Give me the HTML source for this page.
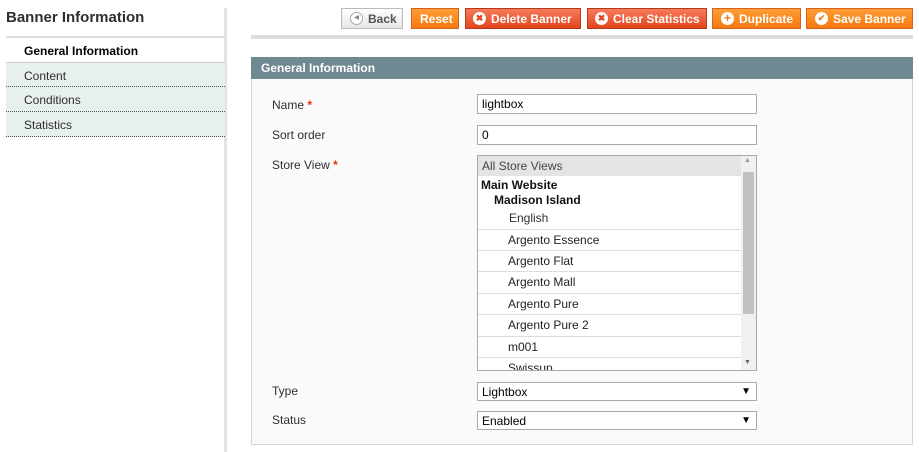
<!DOCTYPE html><html><head><style>
*{margin:0;padding:0;box-sizing:border-box}
body{width:919px;height:452px;background:#fff;font-family:"Liberation Sans",sans-serif;font-size:12px;color:#2f2f2f;position:relative;overflow:hidden}
.a{position:absolute}
.tab{position:absolute;left:6px;width:219px;height:25px;background:#e7efef;border-bottom:1px dotted #555;padding:6px 0 0 18px;font-size:12px;color:#2f2f2f}
.btn{position:absolute;top:8px;height:21px;border:1px solid #d76120;background:linear-gradient(#ff9d35,#f47a10);color:#fff;font-weight:bold;font-size:12px;padding-left:8px;white-space:nowrap;display:flex;align-items:center}
.red{background:linear-gradient(#f77a5a,#e2451c);border-color:#b33a1a}
.ic{display:inline-block;width:13px;height:13px;border-radius:50%;background:#fff;margin-right:5px;position:relative;color:#e2451c;font-size:9px;line-height:13px;text-align:center;flex:none}
.lbl{position:absolute;left:272px;font-size:12px}
.req{color:#eb340a;font-weight:bold}
.in{position:absolute;left:477px;width:280px;height:20px;border:1px solid #aaa;background:#fff;padding:2px 4px;font-size:12px;color:#000}
.opt{position:absolute;left:478px;width:263px;border-top:1px solid #ddd;color:#222}
</style></head><body>
<div class="a" style="left:224px;top:8px;width:3px;height:444px;background:#e2e2e2"></div>
<div class="a" style="left:6px;top:9px;font-size:15px;font-weight:bold;color:#2f2f2f">Banner Information</div>
<div class="a" style="left:6px;top:36px;width:219px;height:2px;background:#ddd"></div>
<div class="a" style="left:24px;top:44px;font-weight:bold;color:#000">General Information</div>
<div class="tab" style="top:62px;border-top:1px solid #ccc">Content</div>
<div class="tab" style="top:87px">Conditions</div>
<div class="tab" style="top:112px">Statistics</div>

<div class="btn" style="left:341px;width:62px;background:linear-gradient(#fff,#e6e6e6);border-color:#bbb;color:#555"><span class="ic" style="border:1px solid #aaa;color:#888;font-size:6px;line-height:11px">◀</span>Back</div>
<div class="btn" style="left:411px;width:48px">Reset</div>
<div class="btn red" style="left:465px;width:116px;padding-left:7px"><span class="ic">✖</span>Delete Banner</div>
<div class="btn red" style="left:587px;width:120px;padding-left:7px"><span class="ic">✖</span>Clear Statistics</div>
<div class="btn" style="left:712px;width:89px"><span class="ic" style="color:#f47a10;font-weight:bold;font-size:12px">+</span>Duplicate</div>
<div class="btn" style="left:806px;width:107px"><span class="ic" style="color:#f47a10;font-size:9px">✔</span>Save Banner</div>
<div class="a" style="left:251px;top:35px;width:662px;height:4px;background:#ddd"></div>

<div class="a" style="left:251px;top:57px;width:662px;height:22px;background:#6f8992;color:#fff;font-weight:bold;padding:4px 0 0 10px">General Information</div>
<div class="a" style="left:251px;top:79px;width:662px;height:366px;background:#fafafa;border:1px solid #d6d6d6;border-top:none"></div>

<div class="lbl" style="top:98px">Name <span class="req">*</span></div>
<div class="lbl" style="top:128px">Sort order</div>
<div class="lbl" style="top:158px">Store View <span class="req">*</span></div>
<div class="lbl" style="top:384px">Type</div>
<div class="lbl" style="top:413px">Status</div>
<div class="in" style="top:94px">lightbox</div>
<div class="in" style="top:125px">0</div>

<div class="a" style="left:477px;top:155px;width:280px;height:216px;border:1px solid #aaa;background:#fff;overflow:hidden">
<div class="a" style="left:0;top:0;width:263px;height:20px;background:#e4e4e4;padding:3px 4px;color:#444">All Store Views</div>
<div class="a" style="left:3px;top:22px;font-weight:bold;color:#111">Main Website</div>
<div class="a" style="left:16px;top:37px;font-weight:bold;color:#111">Madison Island</div>
<div class="a" style="left:31px;top:55px">English</div>
<div class="a" style="left:263px;top:0;width:15px;height:214px;background:#f0f0f0"></div>
<div class="a" style="left:265px;top:16px;width:11px;height:142px;background:#c1c1c1"></div>
<div class="a" style="left:266px;top:1px;font-size:7px;color:#999">▲</div>
<div class="a" style="left:266px;top:203px;font-size:7px;color:#666">▼</div>
</div>
<div class="opt" style="top:229px;height:21px;padding:3px 0 0 30px">Argento Essence</div>
<div class="opt" style="top:250px;height:21px;padding:3px 0 0 30px">Argento Flat</div>
<div class="opt" style="top:271px;height:21px;padding:3px 0 0 30px">Argento Mall</div>
<div class="opt" style="top:293px;height:21px;padding:3px 0 0 30px">Argento Pure</div>
<div class="opt" style="top:314px;height:22px;padding:3px 0 0 30px">Argento Pure 2</div>
<div class="opt" style="top:336px;height:21px;padding:3px 0 0 30px">m001</div>
<div class="opt" style="top:357px;height:13px;padding:3px 0 0 30px;overflow:hidden;line-height:14px">Swissup</div>

<div class="in" style="top:382px;height:19px;padding:2px 4px">Lightbox<span class="a" style="right:5px;top:3px;font-size:10px">▼</span></div>
<div class="in" style="top:411px;height:19px;padding:2px 4px">Enabled<span class="a" style="right:5px;top:3px;font-size:10px">▼</span></div>
</body></html>
